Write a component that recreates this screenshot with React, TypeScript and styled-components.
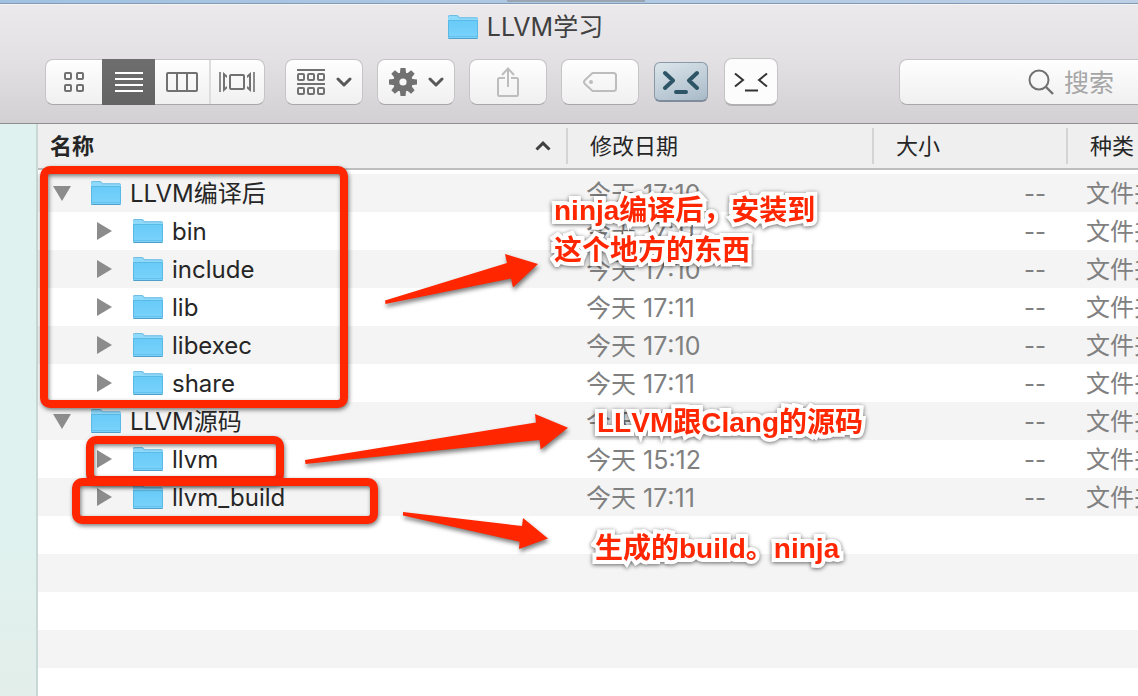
import React from "react";
import styled, { createGlobalStyle, css } from "styled-components";

const GlobalStyle = createGlobalStyle`
  * { box-sizing: border-box; }
  body {
    margin: 0;
    font-family: Inter, "Noto Sans CJK SC", sans-serif;
    color: #262626;
    overflow-x: hidden;
  }
  button, input { font: inherit; color: inherit; }
`;

/* ---------- window ---------- */

const Window = styled.div`
  position: relative;
  display: flex;
  flex-direction: column;
  min-height: 100vh;
  overflow: hidden;
`;

const Desktop = styled.div`
  display: flex;
  justify-content: center;
  height: 4px;
  padding-left: 14px;
  background: linear-gradient(90deg, #a2c1e1, #bdd0e6);
  border-bottom: 1px solid #8499b3;
`;

const DesktopTab = styled.div`
  width: 138px;
  height: 2px;
  background: #9aa5b4;
`;

const Toolbar = styled.header`
  display: flex;
  flex-direction: column;
  gap: 12px;
  height: 120px;
  padding-top: 3px;
  background: linear-gradient(#ebe9eb, #e3e1e4 45%, #d2d0d2);
  border-top: 1px solid #f6f5f6;
  border-bottom: 1px solid #8f8f8f;
`;

const Title = styled.h1`
  display: flex;
  align-items: center;
  justify-content: center;
  gap: 9px;
  height: 38px;
  margin: 0;
  padding-right: 87px;
  font-size: 25px;
  font-weight: 400;
  line-height: 38px;
  color: #404040;
`;

const Tools = styled.div`
  display: flex;
  align-items: center;
  gap: 14px;
  height: 48px;
  padding-left: 45px;
`;

const raised = css`
  height: 46px;
  background: linear-gradient(#fefefe, #f0f0f0);
  border: 1px solid #c6c4c6;
  border-bottom-color: #a9a8a9;
  border-radius: 8px;
`;

const ViewSwitch = styled.div`
  ${raised}
  display: flex;
  width: 220px;
  margin-right: 6px;
`;

const ViewButton = styled.button<{ $active?: boolean; $divided?: boolean }>`
  display: flex;
  flex: 1;
  align-items: center;
  justify-content: center;
  margin: ${(p) => (p.$active ? "-1px 0" : "0")};
  padding: 0;
  border: 0;
  border-left: ${(p) => (p.$divided ? "2px solid #dddddd" : "0")};
  background: ${(p) => (p.$active ? "linear-gradient(#6e6e6e, #636363)" : "none")};
  color: ${(p) => (p.$active ? "#ffffff" : "#717171")};
  &:first-child { flex: 0 0 56px; }
`;

const ToolButton = styled.button<{ $dim?: boolean }>`
  ${raised}
  display: flex;
  flex: none;
  align-items: center;
  justify-content: center;
  gap: 11px;
  width: 78px;
  padding: 0;
  color: ${(p) => (p.$dim ? "#bdbdbd" : "#717171")};
`;

const TerminalButton = styled.button<{ $plain?: boolean }>`
  display: flex;
  flex: none;
  align-items: center;
  justify-content: center;
  width: 54px;
  height: ${(p) => (p.$plain ? "48px" : "40px")};
  margin-left: ${(p) => (p.$plain ? "2px" : "1px")};
  padding: 0;
  border: 1px solid ${(p) => (p.$plain ? "#c4c4c4" : "#8b98a6")};
  border-bottom: 2px solid ${(p) => (p.$plain ? "#b0b0b0" : "#7f8c9b")};
  border-radius: ${(p) => (p.$plain ? "8px" : "6px")};
  background: ${(p) => (p.$plain ? "#fcfcfc" : "linear-gradient(160deg, #dbe5eb, #a9bac8)")};
  color: ${(p) => (p.$plain ? "#333333" : "#2d5566")};
`;

const SearchField = styled.label`
  ${raised}
  display: flex;
  flex: 1;
  align-items: center;
  gap: 10px;
  min-width: 160px;
  margin-left: 107px;
  padding-left: 128px;
  border-right: 0;
  border-radius: 8px 0 0 8px;
  color: #717171;
`;

const SearchInput = styled.input`
  flex: 1;
  min-width: 0;
  width: 0;
  padding: 2px 0 0;
  border: 0;
  outline: 0;
  background: none;
  font-size: 25px;
  line-height: 40px;
  &::placeholder { color: #a6a6a6; opacity: 1; }
`;

/* ---------- file list ---------- */

const Body = styled.div`
  display: flex;
  flex: 1;
`;

const Sidebar = styled.aside`
  flex: none;
  width: 38px;
  background: linear-gradient(#dff2f0, #dff2ef 70%, #e3eeea);
  border-right: 2px solid #c9d8d6;
`;

const Pane = styled.main`
  display: flex;
  flex: 1;
  flex-direction: column;
  min-width: 0;
  background: #ffffff;
`;

const Files = styled.table`
  width: 100%;
  table-layout: fixed;
  border-spacing: 0;
  tbody::before {
    content: "";
    display: block;
    height: 4px;
  }
`;

const Col = styled.col<{ $width?: number }>`
  width: ${(p) => (p.$width ? `${p.$width}px` : "auto")};
`;

const HeadCell = styled.th`
  height: 46px;
  padding: 0;
  overflow: hidden;
  background: #efefef;
  border-bottom: 2px solid #bebebe;
  font-size: 22px;
  text-align: left;
`;

const HeadLabel = styled.div<{ $sorted?: boolean; $last?: boolean }>`
  display: flex;
  align-items: center;
  justify-content: space-between;
  height: 36px;
  padding: ${(p) => (p.$sorted ? "0 15px 0 12px" : "0 0 0 22px")};
  border-right: ${(p) => (p.$last ? "0" : "2px solid #d4d4d4")};
  font-weight: ${(p) => (p.$sorted ? 700 : 400)};
  line-height: 36px;
  white-space: nowrap;
`;

const Row = styled.tr`
  &:nth-child(odd) { background: #f4f4f4; }
`;

const Cell = styled.td<{ $end?: boolean }>`
  height: 38px;
  padding: 2px ${(p) => (p.$end ? "22px" : "0")} 0 18px;
  overflow: hidden;
  color: #808080;
  font-size: 24px;
  line-height: 36px;
  text-align: ${(p) => (p.$end ? "right" : "left")};
  white-space: nowrap;
`;

const TimeCell = styled(Cell)`
  font-size: 25px;
  font-kerning: none;
`;

const NameCell = styled(Cell)`
  padding: 0;
  color: #262626;
`;

const Name = styled.div<{ $depth: number }>`
  display: flex;
  align-items: center;
  gap: 9px;
  height: 38px;
  padding-left: ${(p) => 15 + p.$depth * 42}px;
`;

const FileName = styled.span`
  padding-top: 2px;
`;

const Disclosure = styled.button`
  display: flex;
  align-items: center;
  justify-content: center;
  width: 18px;
  height: 18px;
  margin-right: 11px;
  padding: 0;
  border: 0;
  background: none;
  color: #8c8c8c;
`;

const EmptyRows = styled.div`
  flex: 1;
  background: repeating-linear-gradient(#ffffff 0 38px, #f4f4f4 38px 76px);
`;

/* ---------- annotations drawn over the window ---------- */

const Markup = styled.div`
  position: absolute;
  inset: 0;
  pointer-events: none;
`;

const Frame = styled.div<{ $x: number; $y: number; $w: number; $h: number }>`
  position: absolute;
  left: ${(p) => p.$x}px;
  top: ${(p) => p.$y}px;
  width: ${(p) => p.$w}px;
  height: ${(p) => p.$h}px;
  border: 8px solid #ff2600;
  border-radius: 10px;
  filter: drop-shadow(1px 2px 2px rgba(0, 0, 0, 0.5));
`;

const Arrows = styled.svg`
  position: absolute;
  left: 0;
  top: 0;
  filter: drop-shadow(1px 3px 2px rgba(0, 0, 0, 0.5));
`;

const Note = styled.p<{ $x: number; $y: number }>`
  position: absolute;
  left: ${(p) => p.$x}px;
  top: ${(p) => p.$y}px;
  margin: 0;
  color: #ff2600;
  font-family: "Liberation Sans", "Noto Sans CJK SC", sans-serif;
  font-size: 28px;
  font-weight: 700;
  font-kerning: none;
  line-height: 40px;
  white-space: pre;
  -webkit-text-stroke: 8px #ffffff;
  paint-order: stroke fill;
  stroke-linejoin: round;
  filter: drop-shadow(0 1px 2px rgba(0, 0, 0, 0.6));
`;

/* ---------- icons ---------- */

const FolderIcon = () => (
  <svg width="30" height="26" viewBox="0 0 30 26" aria-hidden="true">
    <defs>
      <linearGradient id="folder" x1="0" y1="0" x2="0" y2="1">
        <stop offset="0" stopColor="#68cbf8" />
        <stop offset="1" stopColor="#7ad2fb" />
      </linearGradient>
    </defs>
    <path d="M0 2.5Q0 1 1.500 1H9Q10 1 10.800 2L12 3.300H28.500Q30 3.300 30 4.800V23.500Q30 24.700 28.800 24.700H1.200Q0 24.700 0 23.500Z" fill="#8fd9fb" />
    <path d="M0.500 3V2.500Q.5 1.500 1.500 1.500H9L11.500 3.800H28.500Q29.500 3.800 29.500 4.800" fill="none" stroke="#70bde2" />
    <path d="M0 6H30V23.500Q30 24.700 28.800 24.700H1.200Q0 24.700 0 23.500Z" fill="url(#folder)" />
    <path d="M0 6.500H30M.5 6V23.500M29.500 6V23.500" stroke="#5bb9e6" strokeWidth="1" fill="none" />
    <path d="M1 22.500H29" stroke="#66c2ec" strokeWidth="1" />
    <path d="M.5 24.500H29.500" stroke="#4f9fc8" strokeWidth="1" />
  </svg>
);

const TriangleIcon = ({ open }: { open: boolean }) => (
  <svg width="18" height="18" viewBox="0 0 18 18" aria-hidden="true">
    <path d={open ? "M0 2H18L9 17Z" : "M2 0V18L17 9Z"} fill="currentColor" />
  </svg>
);

const GridIcon = () => (
  <svg width="20" height="20" fill="none" stroke="currentColor" strokeWidth="2">
    {[1, 13].map((y) => [1, 13].map((x) => <rect key={`${x}-${y}`} x={x} y={y} width="6" height="6" rx="1" />))}
  </svg>
);

const ListIcon = () => (
  <svg width="28" height="20" stroke="currentColor" strokeWidth="2">
    <path d="M0 1H28M0 7H28M0 13H28M0 19H28" />
  </svg>
);

const ColumnsIcon = () => (
  <svg width="32" height="20" fill="none" stroke="currentColor" strokeWidth="2">
    <rect x="1" y="1" width="30" height="18" rx="1" />
    <path d="M11 1V19M21 1V19" />
  </svg>
);

const FlowIcon = () => (
  <svg width="36" height="20" fill="none" stroke="currentColor" strokeWidth="2">
    <rect x="11" y="3" width="14" height="14" rx="1" />
    <path d="M1 0V20M35 0V20" strokeWidth="1.600" />
    <path d="M4 0L8 3.500V6L6 4.500V15.500L8 14V16.500L4 20ZM32 0L28 3.500V6L30 4.500V15.500L28 14V16.500L32 20Z" fill="currentColor" stroke="none" />
  </svg>
);

const GroupIcon = () => (
  <svg width="28" height="26" fill="none" stroke="currentColor" strokeWidth="2">
    <path d="M0 1H28M0 15H28" />
    {[5, 19].map((y) => [1, 11, 21].map((x) => <rect key={`${x}-${y}`} x={x} y={y} width="6" height="6" rx="1" />))}
  </svg>
);

const ChevronIcon = () => (
  <svg width="16" height="10" fill="none" stroke="#585858" strokeWidth="3" strokeLinecap="round" strokeLinejoin="round">
    <path d="M2 2L8 8L14 2" />
  </svg>
);

const GearIcon = () => (
  <svg width="28" height="28" viewBox="-14 -14 28 28">
    {[0, 45, 90, 135].map((a) => (
      <path key={a} d="M-2.500 -14H2.500L3.200 -8V8L2.500 14H-2.500L-3.200 8V-8Z" transform={`rotate(${a})`} fill="currentColor" />
    ))}
    <circle r="9.800" fill="currentColor" />
    <circle r="3.600" fill="#f7f7f7" />
  </svg>
);

const ShareIcon = () => (
  <svg width="22" height="30" fill="none" stroke="currentColor" strokeWidth="2">
    <path d="M8 11H2.500Q1 11 1 12.500V27.500Q1 29 2.500 29H19.500Q21 29 21 27.500V12.500Q21 11 19.500 11H14M11 20V1.500M5 8L11 1.500L17 8" />
  </svg>
);

const TagIcon = () => (
  <svg width="34" height="20" fill="none" stroke="currentColor" strokeWidth="2">
    <path d="M9.500 1H30.500Q33 1 33 3.500V16.500Q33 19 30.500 19H9.500L2 12Q0 10 2 8Z" strokeLinejoin="round" />
    <circle cx="8" cy="10" r="2" fill="currentColor" stroke="none" />
  </svg>
);

const BoldPromptIcon = () => (
  <svg width="36" height="24" fill="none" stroke="currentColor" strokeWidth="4" strokeLinecap="round" strokeLinejoin="round">
    <path d="M2 3L10 10.500L2 18M34 3L26 10.500L34 18M13 22H23" />
  </svg>
);

const ThinPromptIcon = () => (
  <svg width="34" height="20" fill="none" stroke="currentColor" strokeWidth="2">
    <path d="M1 1.500L9 8L1 14.500M33 1.500L25 8L33 14.500M11 18.500H24" />
  </svg>
);

const SearchIcon = () => (
  <svg width="26" height="26" fill="none" stroke="currentColor" strokeWidth="2">
    <circle cx="11" cy="11" r="9.500" />
    <path d="M17.500 17.500L25 25" strokeWidth="2.400" />
  </svg>
);

const SortIcon = () => (
  <svg width="16" height="10" fill="none" stroke="#404040" strokeWidth="3">
    <path d="M1.500 8.500L8 2.200L14.500 8.500" />
  </svg>
);

/* ---------- data ---------- */

const files = [
  { name: "LLVM编译后", depth: 0, time: "今天 17:10" },
  { name: "bin", depth: 1, time: "今天 17:11" },
  { name: "include", depth: 1, time: "今天 17:10" },
  { name: "lib", depth: 1, time: "今天 17:11" },
  { name: "libexec", depth: 1, time: "今天 17:10" },
  { name: "share", depth: 1, time: "今天 17:11" },
  { name: "LLVM源码", depth: 0, time: "今天 17:11" },
  { name: "llvm", depth: 1, time: "今天 15:12" },
  { name: "llvm_build", depth: 1, time: "今天 17:11" },
];

export default function App() {
  return (
    <Window>
      <GlobalStyle />
      <Desktop>
        <DesktopTab />
      </Desktop>
      <Toolbar>
        <Title>
          <FolderIcon />
          LLVM学习
        </Title>
        <Tools>
          <ViewSwitch>
            <ViewButton aria-label="图标"><GridIcon /></ViewButton>
            <ViewButton aria-label="列表" $active><ListIcon /></ViewButton>
            <ViewButton aria-label="分栏"><ColumnsIcon /></ViewButton>
            <ViewButton aria-label="Cover Flow" $divided><FlowIcon /></ViewButton>
          </ViewSwitch>
          <ToolButton aria-label="排列"><GroupIcon /><ChevronIcon /></ToolButton>
          <ToolButton aria-label="操作"><GearIcon /><ChevronIcon /></ToolButton>
          <ToolButton aria-label="共享" $dim><ShareIcon /></ToolButton>
          <ToolButton aria-label="标记" $dim><TagIcon /></ToolButton>
          <TerminalButton aria-label="终端"><BoldPromptIcon /></TerminalButton>
          <TerminalButton aria-label="命令行" $plain><ThinPromptIcon /></TerminalButton>
          <SearchField>
            <SearchIcon />
            <SearchInput type="text" placeholder="搜索" aria-label="搜索" />
          </SearchField>
        </Tools>
      </Toolbar>
      <Body>
        <Sidebar />
        <Pane>
          <Files>
            <colgroup>
              <Col $width={530} />
              <Col $width={306} />
              <Col $width={194} />
              <Col />
            </colgroup>
            <thead>
              <tr>
                <HeadCell scope="col"><HeadLabel $sorted>名称<SortIcon /></HeadLabel></HeadCell>
                <HeadCell scope="col"><HeadLabel>修改日期</HeadLabel></HeadCell>
                <HeadCell scope="col"><HeadLabel>大小</HeadLabel></HeadCell>
                <HeadCell scope="col"><HeadLabel $last>种类</HeadLabel></HeadCell>
              </tr>
            </thead>
            <tbody>
              {files.map((file) => (
                <Row key={file.name}>
                  <NameCell>
                    <Name $depth={file.depth}>
                      <Disclosure aria-label={file.name} aria-expanded={file.depth === 0}>
                        <TriangleIcon open={file.depth === 0} />
                      </Disclosure>
                      <FolderIcon />
                      <FileName>{file.name}</FileName>
                    </Name>
                  </NameCell>
                  <TimeCell>{file.time}</TimeCell>
                  <Cell $end>--</Cell>
                  <Cell>文件夹</Cell>
                </Row>
              ))}
            </tbody>
          </Files>
          <EmptyRows />
        </Pane>
      </Body>
      <Markup>
        <Frame $x={40} $y={166} $w={308} $h={242} />
        <Frame $x={86} $y={436} $w={198} $h={48} />
        <Frame $x={72} $y={478} $w={306} $h={46} />
        <Arrows width="600" height="600" fill="#ff2600" aria-hidden="true">
          <path d="M385 300.500L507 263L505 254L538 264L513 287.500L511 278.500L385.500 304Z" />
          <path d="M305 460L536 422.500L535 414L568 427.700L540.700 449.500L539.500 440L305.500 464Z" />
          <path d="M403 512L522 526L523 518L548 538.500L519 549L519.600 541.700L403 515.500Z" />
        </Arrows>
        <Note $x={554} $y={191}>{"ninja编译后，安装到\n这个地方的东西"}</Note>
        <Note $x={597} $y={403}>LLVM跟Clang的源码</Note>
        <Note $x={595} $y={529}>生成的build。ninja</Note>
      </Markup>
    </Window>
  );
}
